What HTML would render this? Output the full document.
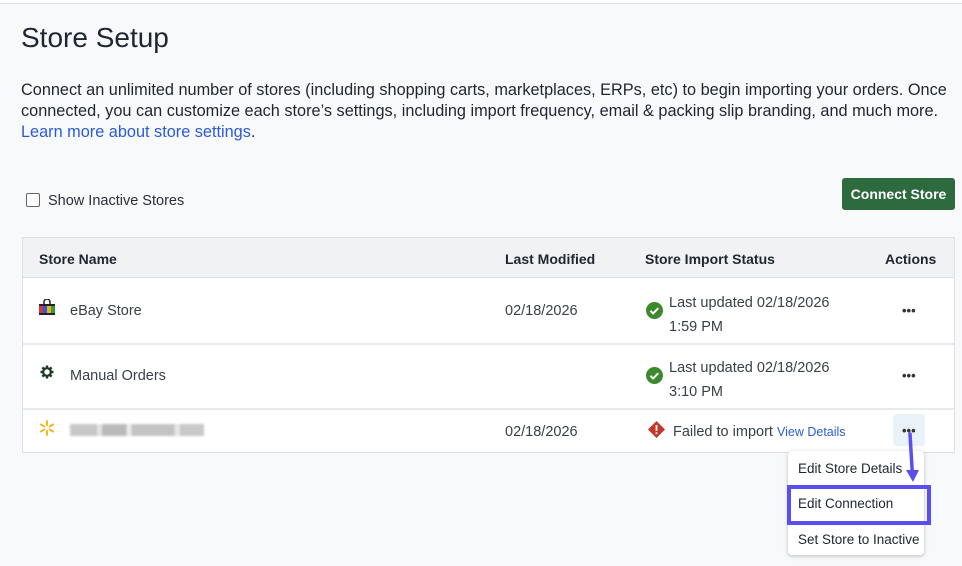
<!DOCTYPE html>
<html><head><meta charset="utf-8"><style>
*{margin:0;padding:0;box-sizing:border-box}
body{width:962px;height:566px;background:#f8f9fb;font-family:"Liberation Sans",sans-serif;color:#1f2630;position:relative;overflow:hidden}
.a{position:absolute;white-space:nowrap}
.topline{position:absolute;left:0;top:0;width:962px;height:4px;background:#fff;border-bottom:1px solid #dde0e4}
h1{position:absolute;left:21px;top:22px;font-size:28px;font-weight:normal;color:#1f2630}
.desc{position:absolute;left:21px;top:80px;width:930px;font-size:16.3px;line-height:21px;color:#1f2630}
.desc a{color:#2a5bd7;text-decoration:none}
.cb{position:absolute;left:26px;top:193px;width:14px;height:14px;border:1.5px solid #666;border-radius:2px;background:#fff}
.btn{position:absolute;left:842px;top:178px;width:113px;height:32px;background:#2d6a3e;color:#fff;border-radius:3px;font-size:14px;font-weight:bold;text-align:center;line-height:32px}
.tbl{position:absolute;left:22px;top:237px;width:933px;height:216px;background:#fff;border:1px solid #dcdfe3}
.hdr{position:absolute;left:0;top:0;width:931px;height:40px;background:#f1f2f4;border-bottom:1px solid #dcdfe3}
.sep{position:absolute;left:0;width:931px;height:2px;background:#e8eaee}
.th{font-size:14px;font-weight:bold;color:#1f2630}
.td{font-size:14.5px;color:#3a4048}
.dots{font-size:13px;font-weight:bold;color:#333}
.menu{position:absolute;left:788px;top:451px;width:136px;height:104px;background:#fff;border-radius:4px;box-shadow:0 1px 4px rgba(0,0,0,.25)}
.mi{position:absolute;left:10px;font-size:13.5px;color:#1f2630;white-space:nowrap}
</style></head><body>
<div class="topline"></div>
<h1>Store Setup</h1>
<div class="desc">Connect an unlimited number of stores (including shopping carts, marketplaces, ERPs, etc) to begin importing your orders. Once connected, you can customize each store’s settings, including import frequency, email &amp; packing slip branding, and much more.<br><a>Learn more about store settings</a>.</div>
<div class="cb"></div>
<div class="a" style="left:48px;top:193px;font-size:14.5px;color:#2a3038">Show Inactive Stores</div>
<div class="btn">Connect Store</div>
<div class="tbl">
<div class="hdr"></div>
<div class="a th" style="left:16px;top:13px">Store Name</div>
<div class="a th" style="left:482px;top:13px">Last Modified</div>
<div class="a th" style="left:622px;top:13px">Store Import Status</div>
<div class="a th" style="left:862px;top:13px">Actions</div>
<div class="sep" style="top:105px"></div>
<div class="sep" style="top:170px"></div>
<svg class="a" style="left:16px;top:61px" width="16" height="16" viewBox="0 0 16 16"><path d="M5 5V3a3 3 0 0 1 6 0v2" stroke="#222" stroke-width="1.5" fill="none"/><rect x="0" y="5" width="16" height="2" fill="#222"/><rect x="0" y="7" width="4" height="7" fill="#d33"/><rect x="4" y="7" width="4" height="7" fill="#2a5bd7"/><rect x="8" y="7" width="4" height="7" fill="#e8b020"/><rect x="12" y="7" width="4" height="7" fill="#3a9a3a"/><rect x="0" y="14" width="16" height="2" fill="#222"/></svg>
<div class="a td" style="left:47px;top:65px">eBay Store</div>
<div class="a td" style="left:482px;top:65px">02/18/2026</div>
<svg class="a" style="left:623px;top:64px" width="17" height="17"><circle cx="8.5" cy="8.5" r="8.5" fill="#3d8a2e"/><path d="M4.5 8.8l2.6 2.6 5.2-5.2" stroke="#fff" stroke-width="2" fill="none"/></svg>
<div class="a td" style="left:646px;top:53px;line-height:24px">Last updated 02/18/2026<br>1:59 PM</div>
<div class="a dots" style="left:879px;top:65px">•••</div>
<svg class="a" style="left:17px;top:127px" width="14" height="14" viewBox="0 0 14 14"><circle cx="7" cy="7" r="3.8" fill="none" stroke="#1f3a24" stroke-width="2.2"/><g stroke="#1f3a24" stroke-width="2.4"><path d="M7 0.5v2.5M7 11v2.5M0.5 7h2.5M11 7h2.5M2.4 2.4l1.8 1.8M9.8 9.8l1.8 1.8M2.4 11.6l1.8-1.8M9.8 4.2l1.8-1.8"/></g></svg>
<div class="a td" style="left:47px;top:130px">Manual Orders</div>
<svg class="a" style="left:623px;top:129px" width="17" height="17"><circle cx="8.5" cy="8.5" r="8.5" fill="#3d8a2e"/><path d="M4.5 8.8l2.6 2.6 5.2-5.2" stroke="#fff" stroke-width="2" fill="none"/></svg>
<div class="a td" style="left:646px;top:118px;line-height:24px">Last updated 02/18/2026<br>3:10 PM</div>
<div class="a dots" style="left:879px;top:130px">•••</div>
<svg class="a" style="left:16px;top:182px" width="16" height="16" viewBox="0 0 16 16" stroke="#f5b820" stroke-width="2" stroke-linecap="round"><path d="M8 1v4M8 11v4M1.9 4.5l3.5 2M10.6 9.5l3.5 2M1.9 11.5l3.5-2M10.6 6.5l3.5-2"/></svg>
<div class="a" style="left:47px;top:186px;width:134px;height:12px;background:linear-gradient(90deg,#bbb 0 20%,#ddd 20% 24%,#aaa 24% 42%,#e5e5e5 42% 46%,#b5b5b5 46% 78%,#e0e0e0 78% 82%,#bcbcbc 82%);opacity:.8;filter:blur(1px)"></div>
<div class="a td" style="left:482px;top:186px">02/18/2026</div>
<svg class="a" style="left:625px;top:183px" width="17" height="17" viewBox="0 0 17 17"><path d="M8.5 0L17 8.5 8.5 17 0 8.5z" fill="#c0392b"/><rect x="7.6" y="4" width="1.8" height="6" fill="#fff"/><rect x="7.6" y="11.3" width="1.8" height="1.8" fill="#fff"/></svg>
<div class="a td" style="left:650px;top:186px">Failed to import</div>
<div class="a" style="left:754px;top:187px;font-size:12.5px;color:#2a5bd7">View Details</div>
<div class="a" style="left:870px;top:176px;width:32px;height:32px;background:#e9f1f9;border-radius:4px"></div>
<div class="a dots" style="left:879px;top:185px">•••</div>
</div>
<div class="menu">
<div class="mi" style="top:10px">Edit Store Details</div>
<div class="mi" style="top:45px">Edit Connection</div>
<div class="mi" style="top:81px">Set Store to Inactive</div>
</div>
<div class="a" style="left:787px;top:485px;width:144px;height:40px;border:4px solid #5b4ef0"></div>
<svg class="a" style="left:902px;top:432px" width="20" height="54"><path d="M8 2L10.5 44" stroke="#5b4ef0" stroke-width="3.5" stroke-linecap="round"/><path d="M4 38l7 12 6-12z" fill="#5b4ef0"/></svg>
</body></html>
